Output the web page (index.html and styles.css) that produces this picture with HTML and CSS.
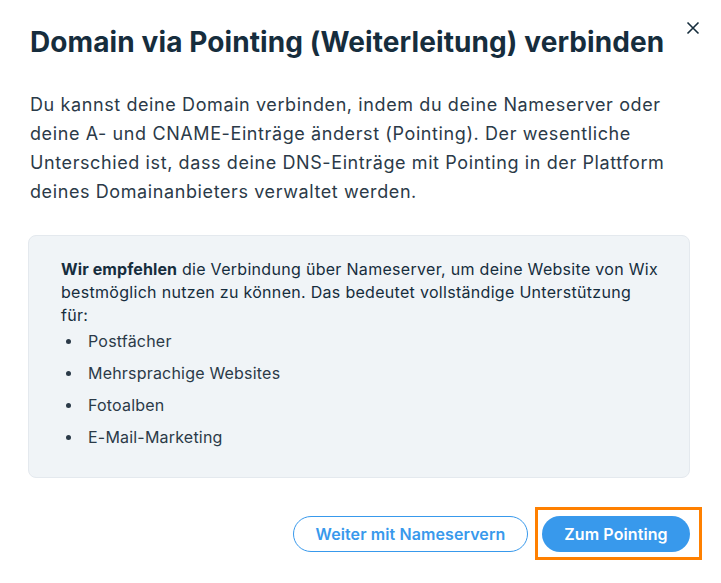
FILE: index.html
```html
<!DOCTYPE html>
<html lang="de">
<head>
<meta charset="utf-8">
<link rel="stylesheet" href="styles.css">
</head>
<body>
<div class="dialog">
  <button class="close" aria-label="Schließen">
    <svg width="14" height="14" viewBox="0 0 14 14"><path d="M1.5 1.5 L12.5 12.5 M12.5 1.5 L1.5 12.5" stroke="#162d3d" stroke-width="1.6" fill="none"/></svg>
  </button>
  <h1 class="title">Domain via Pointing (Weiterleitung) verbinden</h1>
  <p class="intro">Du kannst deine Domain verbinden, indem du deine Nameserver oder deine A- und CNAME-Einträge änderst (Pointing). Der wesentliche Unterschied ist, dass deine DNS-Einträge mit Pointing in der Plattform deines Domainanbieters verwaltet werden.</p>
  <div class="note">
    <p class="note-text"><strong>Wir empfehlen</strong> die Verbindung über Nameserver, um deine Website von Wix bestmöglich nutzen zu können. Das bedeutet vollständige Unterstützung für:</p>
    <ul class="list">
      <li>Postfächer</li>
      <li>Mehrsprachige Websites</li>
      <li>Fotoalben</li>
      <li>E-Mail-Marketing</li>
    </ul>
  </div>
  <div class="actions">
    <button class="btn btn-outline">Weiter mit Nameservern</button>
    <div class="highlight">
      <button class="btn btn-primary">Zum Pointing</button>
    </div>
  </div>
</div>
</body>
</html>
```
FILE: styles.css
```css
html, body {
  margin: 0;
  padding: 0;
  background: #ffffff;
}
body {
  font-family: Inter, "Noto Sans", sans-serif;
  color: #162d3d;
  width: 721px;
  height: 583px;
  overflow: hidden;
}
.dialog {
  position: relative;
  padding: 24px 31px 0 30px;
}
.close {
  position: absolute;
  top: 21px;
  right: 21px;
  background: none;
  border: 0;
  padding: 0;
  width: 14px;
  height: 14px;
  display: flex;
}
.title {
  margin: 0;
  font-size: 28px;
  font-weight: 700;
  line-height: 36px;
  color: #162d3d;
  letter-spacing: 0.1px;
}
.intro {
  margin: 30px 0 0 0;
  font-size: 18px;
  line-height: 29px;
  color: #2b3a48;
  letter-spacing: 0.6px;
  max-width: 650px;
}
.note {
  margin: 29px 0 0 -2px;
  background: #f0f4f7;
  border: 1px solid #e4e9ee;
  border-radius: 8px;
  padding: 22px 28px 24px 32px;
}
.note-text {
  margin: 0;
  font-size: 16px;
  line-height: 23px;
  color: #162d3d;
  letter-spacing: 0.3px;
}
.note-text strong {
  font-weight: 700;
  letter-spacing: 0.1px;
}
.list {
  list-style: none;
  margin: -2px 0 0 0;
  padding: 0 0 0 27px;
  font-size: 16px;
  line-height: 32px;
  color: #2b3a48;
  letter-spacing: 0.2px;
}
.list li {
  position: relative;
}
.list li::before {
  content: "";
  position: absolute;
  left: -22px;
  top: 14px;
  width: 5px;
  height: 5px;
  border-radius: 50%;
  background: #2b3a48;
}
.actions {
  display: flex;
  justify-content: flex-end;
  align-items: center;
  gap: 7px;
  margin-top: 29px;
  margin-right: -12px;
}
.btn {
  font-family: Inter, "Noto Sans", sans-serif;
  font-size: 16px;
  font-weight: 600;
  height: 36px;
  border-radius: 18px;
  padding: 0 20px;
  cursor: pointer;
  letter-spacing: 0.1px;
}
.btn-outline {
  background: #ffffff;
  border: 1px solid #3899ec;
  color: #3899ec;
  width: 235px;
}
.btn-primary {
  background: #3899ec;
  border: 0;
  color: #ffffff;
  width: 148px;
}
.highlight {
  border: 3px solid #ff8000;
  padding: 6px 9px 5px 4px;
  display: flex;
}
```
